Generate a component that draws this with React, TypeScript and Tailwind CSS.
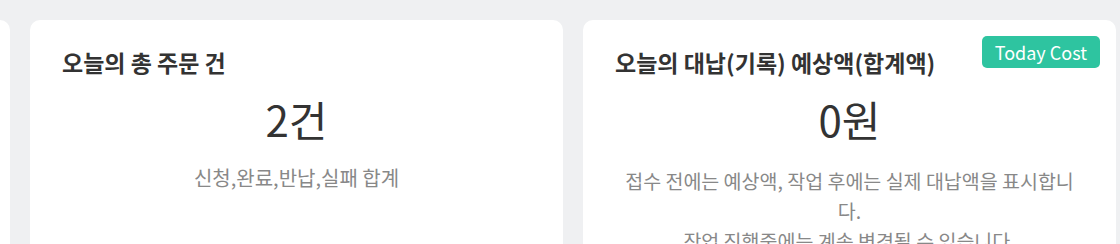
import React from 'react';

const font = { fontFamily: '"Noto Sans CJK KR", "Noto Sans", sans-serif' };

function StatCard({
  title,
  value,
  desc,
  badge,
}: {
  title: string;
  value: string;
  desc?: React.ReactNode;
  badge?: string;
}) {
  return (
    <div className="relative w-[533px] h-[300px] shrink-0 rounded-[10px] bg-white px-8 pt-7">
      {badge && (
        <span className="absolute right-4 top-4 rounded-[5px] bg-[#2ec4a0] px-[13px] h-8 flex items-center text-[18px] text-white">
          {badge}
        </span>
      )}
      <h3 className="text-[23px] leading-7 font-bold text-[#333]">{title}</h3>
      <div className="mt-[18px] text-center text-[42px] leading-[50px] text-[#333]">{value}</div>
      {desc}
    </div>
  );
}

export default function App() {
  return (
    <div className="h-[244px] w-[1120px] overflow-hidden bg-[#eff0f2]" style={font}>
      <div className="flex gap-5 pt-5 ml-[-523px]">
        <StatCard title="" value="" />
        <StatCard
          title="오늘의 총 주문 건"
          value="2건"
          desc={
            <p className="mt-[19px] text-center text-[20px] leading-[30px] text-[#888]">
              신청,완료,반납,실패 합계
            </p>
          }
        />
        <StatCard
          title="오늘의 대납(기록) 예상액(합계액)"
          value="0원"
          badge="Today Cost"
          desc={
            <p className="mt-[22px] px-1 text-center text-[19.5px] leading-[30px] text-[#888]">
              접수 전에는 예상액, 작업 후에는 실제 대납액을 표시합니다.
              <br />
              작업 진행중에는 계속 변경될 수 있습니다.
            </p>
          }
        />
        <StatCard title="" value="" />
      </div>
    </div>
  );
}
